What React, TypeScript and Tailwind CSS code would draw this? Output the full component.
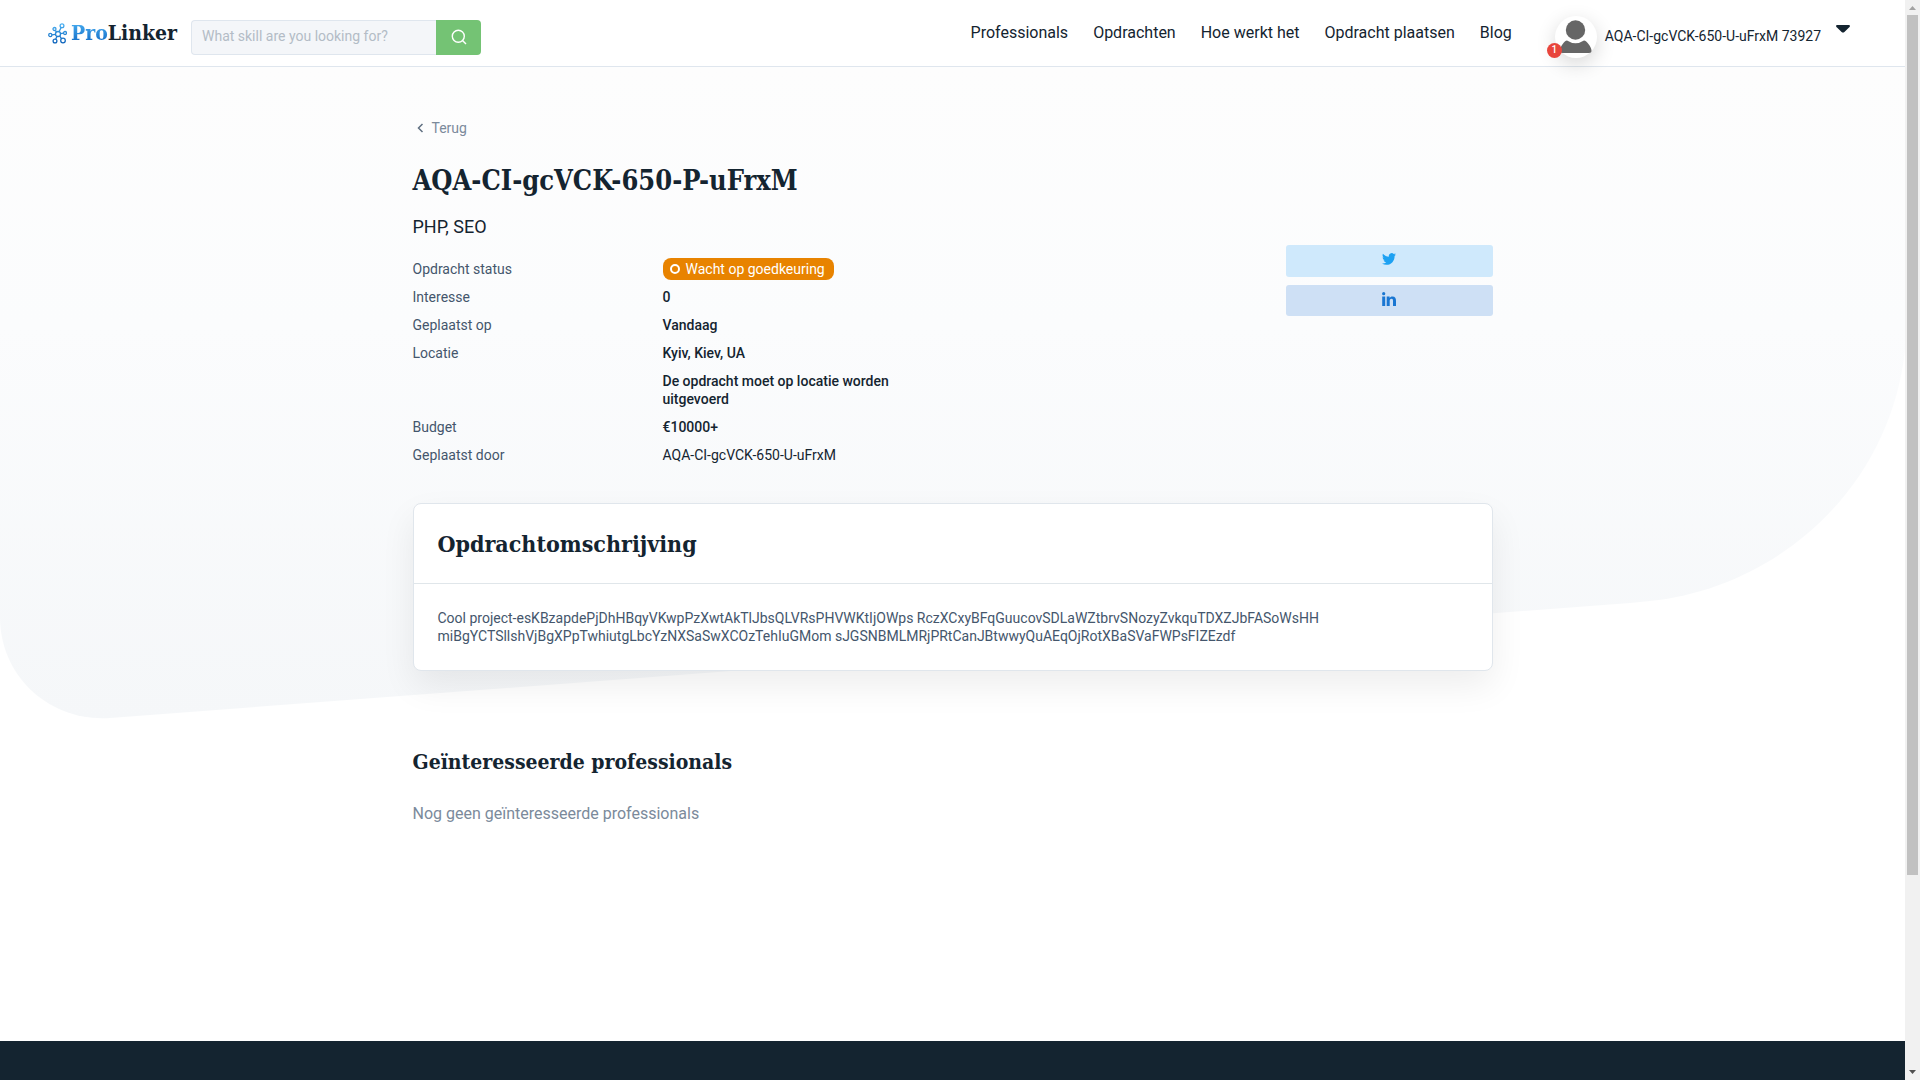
import React from "react";

const slab = "font-['Roboto_Slab','DejaVu_Serif_Condensed','DejaVu_Serif',serif] font-bold text-[#142430]";

const navItems = ["Professionals", "Opdrachten", "Hoe werkt het", "Opdracht plaatsen", "Blog"];

function Logo() {
  return (
    <a href="#" aria-label="ProLinker" className="flex items-center gap-1">
      <svg width="19" height="21" viewBox="0 0 19 21" fill="none" strokeWidth="1.3">
        <defs>
          <linearGradient id="mark" x1="0" y1="0" x2="0" y2="21" gradientUnits="userSpaceOnUse">
            <stop stopColor="#4db4f5" />
            <stop offset="1" stopColor="#0a5fb8" />
          </linearGradient>
        </defs>
        <g stroke="url(#mark)">
          <circle cx="10" cy="11" r="2.5" />
          <circle cx="14" cy="2.7" r="1.9" />
          <circle cx="6.5" cy="6" r="1.5" />
          <circle cx="2.3" cy="12" r="1.6" />
          <circle cx="7" cy="18" r="1.9" />
          <circle cx="15" cy="17.5" r="2.3" />
          <circle cx="17" cy="10" r="1.5" />
          <path d="M13.2 4.4 11 8.7M7.3 7.3 8.6 9M3.9 11.8l3.6-.5M7.7 16.2 9 13.3M13.4 15.7l-1.7-2.8M15.5 10.2l-3 .5" />
        </g>
      </svg>
      <span className="font-['Roboto_Slab','DejaVu_Serif_Condensed','DejaVu_Serif',serif] text-[21px] leading-6 font-bold text-[#142430]">
        <span className="bg-linear-to-b from-[#4db4f5] to-[#0a66c2] bg-clip-text text-transparent">Pro</span>
        Linker
      </span>
    </a>
  );
}

function Header() {
  return (
    <header className="relative z-10 flex h-[67px] items-center border-b border-[#dfe6ee] bg-white pr-[55px] pl-12">
      <div className="w-[143px]">
        <Logo />
      </div>
      <form className="mt-2 flex h-[35px] w-[290px]">
        <input
          type="text"
          aria-label="Search skill"
          placeholder="What skill are you looking for?"
          className="min-w-0 flex-1 rounded-l border border-r-0 border-[#dfe6ee] bg-[#f4f6f9] px-2.5 pb-0.5 text-sm text-[#142430] placeholder:text-[#b3bcc6]"
        />
        <button type="button" aria-label="Search" className="flex w-[45px] items-center justify-center rounded-r bg-[#74c374]">
          <svg width="16" height="16" viewBox="0 0 16 16" fill="none" stroke="#fff" strokeWidth="1.4">
            <circle cx="7.3" cy="7.3" r="6" />
            <path d="m11.5 11.5 3.5 3.5" />
          </svg>
        </button>
      </form>
      <nav className="ml-auto flex gap-[25px] text-base text-[#142430]">
        {navItems.map((item) => (
          <a key={item} href="#">{item}</a>
        ))}
      </nav>
      <button type="button" className="ml-[43px] flex items-center text-sm text-[#142430]">
        <span className="relative mt-2 flex size-[42px] items-center justify-center rounded-full bg-white shadow-[0_6px_20px_rgba(0,0,0,0.16)]">
          <svg width="32" height="34" viewBox="0 0 32 34" fill="#666">
            <circle cx="15.5" cy="10" r="9.7" />
            <path d="M7 20.5q8.500 5.500 17 0c2.500 0 7.500 6.500 7.500 10 0 1.800-.8 2.500-2.500 2.500H2.500C.8 33 0 32.300 0 30.500c0-3.500 4.500-10 7-10Z" />
          </svg>
          <span className="absolute bottom-0 -left-2 flex size-[15px] items-center justify-center rounded-full bg-[#e8453c] text-[10px] font-medium text-white">1</span>
        </span>
        <span className="mt-1.5 ml-2">AQA-CI-gcVCK-650-U-uFrxM 73927</span>
        <svg className="mb-2 ml-[15px]" width="14" height="8" viewBox="0 0 14 8" fill="#142430">
          <path d="M1 0h12q1 0 .9 1.200Q13.800 2 13 2.600L8.400 7q-1.400 1-2.800 0L1 2.600Q.2 2 .1 1.200 0 0 1 0Z" />
        </svg>
      </button>
    </header>
  );
}

function Backdrop() {
  return (
    <svg aria-hidden="true" className="absolute inset-x-0 top-0 h-[652px] w-full" viewBox="0 0 1905 652" preserveAspectRatio="none">
      <defs>
        <linearGradient id="haze" x1="0" y1="0" x2="0" y2="1">
          <stop stopColor="#fdfdfd" />
          <stop offset="0.4" stopColor="#fbfcfd" />
          <stop offset="1" stopColor="#f5f7f9" />
        </linearGradient>
      </defs>
      <path fill="url(#haze)" d="M0 0H1905V283C1890 420 1780 520 1650 534L1630 536L110 651C50 655 0 610 0 550Z" />
    </svg>
  );
}

const rows: { label: string; value: React.ReactNode }[] = [
  { label: "Interesse", value: <strong className="font-medium">0</strong> },
  { label: "Geplaatst op", value: <strong className="font-medium">Vandaag</strong> },
  { label: "Locatie", value: <strong className="font-medium">Kyiv, Kiev, UA</strong> },
  { label: "", value: <strong className="font-medium">De opdracht moet op locatie worden uitgevoerd</strong> },
  { label: "Budget", value: <strong className="font-medium">€10000+</strong> },
  { label: "Geplaatst door", value: <a href="#">AQA-CI-gcVCK-650-U-uFrxM</a> },
];

function Details() {
  return (
    <dl className="w-[500px] text-sm leading-[18px] text-[#142430]">
      <div className="flex h-[29px] items-center">
        <dt className="w-[250px] text-[#44566c]">Opdracht status</dt>
        <dd className="flex h-[22px] items-center gap-1.5 rounded-lg bg-[#e88300] px-[7px] pr-[9px] text-white">
          <span className="size-2.5 rounded-full border-2 border-white" />
          Wacht op goedkeuring
        </dd>
      </div>
      {rows.map((row) => (
        <div key={row.label} className="flex py-[5px]">
          <dt className="w-[250px] shrink-0 text-[#44566c]">{row.label}</dt>
          <dd className="min-w-0">{row.value}</dd>
        </div>
      ))}
    </dl>
  );
}

function Share() {
  return (
    <div className="flex w-[207px] flex-col gap-2">
      <button type="button" aria-label="Share on Twitter" className="flex h-8 items-center justify-center rounded-[3px] bg-[#cfe9fc] pb-1">
        <svg width="14" height="12" viewBox="0 2 24 20" fill="#1da1f2" preserveAspectRatio="none">
          <path d="M23.953 4.570a10 10 0 0 1-2.825.775 4.958 4.958 0 0 0 2.163-2.723 9.990 9.990 0 0 1-3.127 1.184 4.920 4.920 0 0 0-8.384 4.482C7.690 8.095 4.067 6.130 1.640 3.162a4.822 4.822 0 0 0-.666 2.475c0 1.710.87 3.213 2.188 4.096a4.904 4.904 0 0 1-2.228-.616v.06a4.923 4.923 0 0 0 3.946 4.827 4.996 4.996 0 0 1-2.212.085 4.936 4.936 0 0 0 4.604 3.417 9.867 9.867 0 0 1-6.102 2.105c-.39 0-.779-.023-1.170-.067a13.995 13.995 0 0 0 7.557 2.209c9.053 0 13.998-7.496 13.998-13.985 0-.21 0-.42-.015-.63a9.935 9.935 0 0 0 2.460-2.548z" />
        </svg>
      </button>
      <button type="button" aria-label="Share on LinkedIn" className="flex h-[31px] items-center justify-center rounded-[3px] bg-[#cee0f5] pb-1">
        <svg width="14" height="14" viewBox="0 0 14 14" fill="#1976d2">
          <circle cx="1.7" cy="1.7" r="1.6" />
          <path d="M.2 4.600h3V14H.2zM4.700 4.600h2.900v1.300C8.100 5 9.100 4.400 10.400 4.400c2.800 0 3.600 1.800 3.600 4.300V14H11V9.300c0-1.200 0-2.500-1.500-2.500S7.700 8 7.700 9.200V14H4.700z" />
        </svg>
      </button>
    </div>
  );
}

function Scrollbar() {
  return (
    <div aria-hidden="true" className="flex h-full w-[15px] shrink-0 flex-col items-center bg-[#f1f1f1]">
      <svg width="15" height="15" viewBox="0 0 15 15" className="shrink-0" fill="#a3a3a3"><path d="M4 10h7L7.500 6z" /></svg>
      <div className="w-[11px] flex-[86] bg-[#c1c1c1]" />
      <div className="flex-[19]" />
      <svg width="15" height="15" viewBox="0 0 15 15" className="shrink-0" fill="#505050"><path d="M4 5h7L7.500 9z" /></svg>
    </div>
  );
}

export default function App() {
  return (
    <div className="flex h-screen overflow-hidden bg-white font-['Roboto',sans-serif]">
      <div className="flex min-w-0 flex-1 flex-col">
        <Header />
        <main className="relative flex-1">
          <Backdrop />
          <div className="relative mx-auto max-w-[1080px] pt-[49px]">
            <a href="#" className="inline-flex items-center gap-2 pl-1 text-sm text-[#7b8a9b]">
              <svg width="7" height="10" viewBox="0 0 7 10" fill="none" stroke="#5f6f80" strokeWidth="1.5"><path d="M5.500 1 1.500 5l4 4" /></svg>
              Terug
            </a>
            <h1 className={`${slab} mt-[23px] text-[27px] leading-9`}>AQA-CI-gcVCK-650-P-uFrxM</h1>
            <p className="mt-4 text-lg leading-6 text-[#142430]">PHP, SEO</p>
            <div className="mt-[15px] flex justify-between">
              <Details />
              <div className="-mt-[9px]">
                <Share />
              </div>
            </div>
            <section className="mt-[34px] rounded-lg border border-[#e0e6ec] bg-white shadow-[0_15px_35px_rgba(0,0,0,0.07)]">
              <h2 className={`${slab} border-b border-[#e0e6ea] px-6 py-6 text-[23px] leading-[31px]`}>Opdrachtomschrijving</h2>
              <p className="px-6 py-[25px] text-sm leading-[18px] text-[#44566c]">
                Cool project-esKBzapdePjDhHBqyVKwpPzXwtAkTlJbsQLVRsPHVWKtIjOWps RczXCxyBFqGuucovSDLaWZtbrvSNozyZvkquTDXZJbFASoWsHH miBgYCTSllshVjBgXPpTwhiutgLbcYzNXSaSwXCOzTehIuGMom sJGSNBMLMRjPRtCanJBtwwyQuAEqOjRotXBaSVaFWPsFIZEzdf
              </p>
            </section>
            <h2 className={`${slab} mt-[75px] text-[21px] leading-8`}>Geïnteresseerde professionals</h2>
            <p className="mt-6 text-base text-[#7b8a9b]">Nog geen geïnteresseerde professionals</p>
          </div>
        </main>
        <footer className="h-[39px] bg-[#142430]" />
      </div>
      <Scrollbar />
    </div>
  );
}
